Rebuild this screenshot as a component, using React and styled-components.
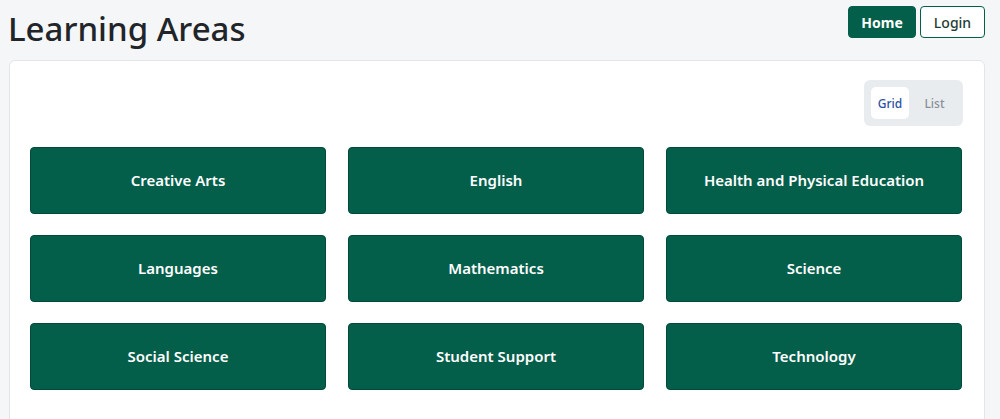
import React, { useState } from 'react';
import styled, { createGlobalStyle } from 'styled-components';

const GlobalStyle = createGlobalStyle`
  html, body {
    margin: 0;
    padding: 0;
    background: #f5f6f7;
    font-family: "Noto Sans", "Open Sans", Arial, sans-serif;
    color: #212529;
  }
`;

const Page = styled.div`
  padding: 0 15px 0 9px;
  height: 419px;
  overflow: hidden;
  box-sizing: border-box;
`;

const Header = styled.div`
  display: flex;
  justify-content: space-between;
  align-items: flex-start;
  height: 60px;
`;

const Title = styled.h1`
  margin: 8px 0 0 -1px;
  font-size: 33px;
  font-weight: 500;
  line-height: 42px;
  color: #212529;
`;

const Nav = styled.div`
  display: flex;
  gap: 4px;
  margin-top: 6px;
`;

const NavButton = styled.button`
  width: ${p => (p.$primary ? '68px' : '65px')};
  height: 32px;
  padding: 0;
  border-radius: 4px;
  border: 1px solid #035e4a;
  background: ${p => (p.$primary ? '#035e4a' : '#fff')};
  color: ${p => (p.$primary ? '#fff' : '#1d3b34')};
  font-family: inherit;
  font-size: 14px;
  font-weight: ${p => (p.$primary ? 700 : 500)};
  cursor: pointer;
`;

const Card = styled.div`
  background: #fff;
  border: 1px solid #e3e6e9;
  border-radius: 6px;
  padding: 19px 21px 40px 20px;
`;

const Toolbar = styled.div`
  display: flex;
  justify-content: flex-end;
  margin-bottom: 21px;
`;

const Toggle = styled.div`
  display: flex;
  background: #e9ecef;
  border-radius: 6px;
  padding: 7px;
  gap: 4px;
`;

const ToggleButton = styled.button`
  width: ${p => p.$w}px;
  height: 32px;
  border: none;
  border-radius: 5px;
  background: ${p => (p.$active ? '#fff' : 'transparent')};
  color: ${p => (p.$active ? '#2a4fa3' : '#8a9097')};
  font-family: inherit;
  font-size: 12px;
  font-weight: 500;
  padding: 0;
  cursor: pointer;
`;

const Grid = styled.div`
  display: grid;
  grid-template-columns: repeat(3, 296px);
  column-gap: 22px;
  row-gap: 21px;
`;

const Tile = styled.button`
  height: 67px;
  padding: 0 0 2px;
  background: #035e4a;
  border: 1px solid #024a3a;
  border-radius: 4px;
  color: #fff;
  font-family: inherit;
  font-size: 15px;
  font-weight: 600;
  cursor: pointer;
`;

const areas = [
  'Creative Arts',
  'English',
  'Health and Physical Education',
  'Languages',
  'Mathematics',
  'Science',
  'Social Science',
  'Student Support',
  'Technology',
];

export default function App() {
  const [view, setView] = useState('grid');
  return (
    <Page>
      <GlobalStyle />
      <Header>
        <Title>Learning Areas</Title>
        <Nav>
          <NavButton $primary>Home</NavButton>
          <NavButton>Login</NavButton>
        </Nav>
      </Header>
      <Card>
        <Toolbar>
          <Toggle>
            <ToggleButton $w={38} $active={view === 'grid'} onClick={() => setView('grid')}>Grid</ToggleButton>
            <ToggleButton $w={43} $active={view === 'list'} onClick={() => setView('list')}>List</ToggleButton>
          </Toggle>
        </Toolbar>
        <Grid>
          {areas.map(a => (
            <Tile key={a}>{a}</Tile>
          ))}
        </Grid>
      </Card>
    </Page>
  );
}
